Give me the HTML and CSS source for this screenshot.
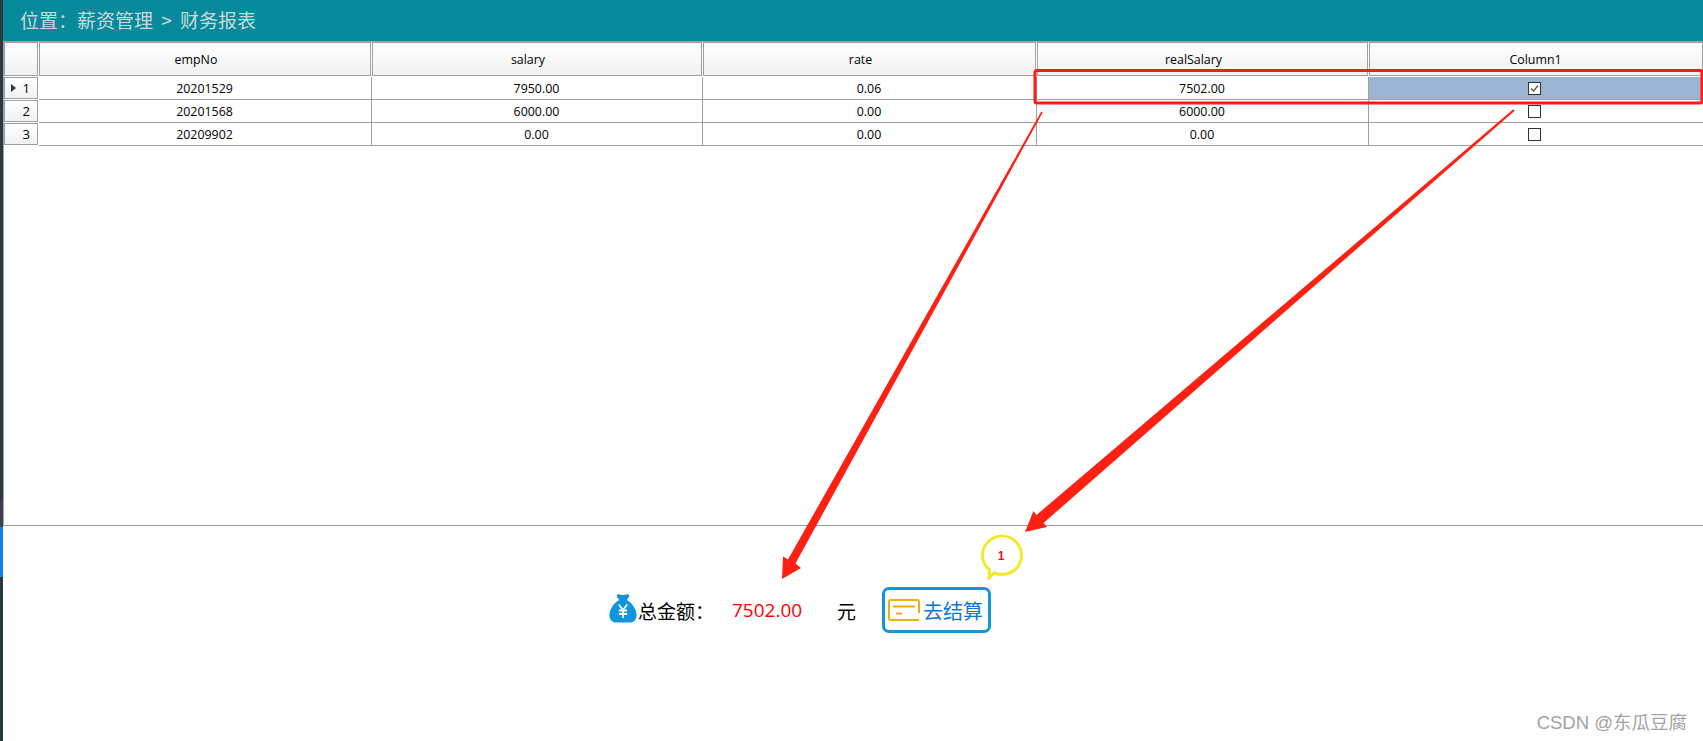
FILE: index.html
```html
<!DOCTYPE html>
<html lang="zh">
<head>
<meta charset="utf-8">
<title>财务报表</title>
<link rel="stylesheet" href="styles.css">
</head>
<body>
<div class="app">
  <aside class="rail">
    <div class="rail-top"></div>
    <div class="rail-mid"></div>
    <div class="rail-active"></div>
    <div class="rail-bottom"></div>
  </aside>
  <main class="main">
    <header class="topbar">位置：薪资管理 &gt; 财务报表</header>
    <section class="gridbox">
      <div class="grid">
        <div class="corner"></div>
        <div class="head">empNo</div>
        <div class="head">salary</div>
        <div class="head">rate</div>
        <div class="head">realSalary</div>
        <div class="head head-plain">Column1</div>

        <div class="rowhead"><span class="pointer"></span>1</div>
        <div class="cell">20201529</div>
        <div class="cell">7950.00</div>
        <div class="cell">0.06</div>
        <div class="cell">7502.00</div>
        <div class="cell cell-box cell-selected"><svg class="check" viewBox="0 0 13 13"><rect x="0.5" y="0.5" width="12" height="12" fill="#fff" stroke="#333"/><path d="M3 6.5 5.5 9 10 3.5" fill="none" stroke="#555" stroke-width="1.2"/></svg></div>

        <div class="rowhead">2</div>
        <div class="cell">20201568</div>
        <div class="cell">6000.00</div>
        <div class="cell">0.00</div>
        <div class="cell">6000.00</div>
        <div class="cell cell-box"><svg class="check" viewBox="0 0 13 13"><rect x="0.5" y="0.5" width="12" height="12" fill="#fff" stroke="#333"/></svg></div>

        <div class="rowhead">3</div>
        <div class="cell">20209902</div>
        <div class="cell">0.00</div>
        <div class="cell">0.00</div>
        <div class="cell">0.00</div>
        <div class="cell cell-box"><svg class="check" viewBox="0 0 13 13"><rect x="0.5" y="0.5" width="12" height="12" fill="#fff" stroke="#333"/></svg></div>
      </div>
    </section>
    <footer class="footer">
      <svg class="bag" viewBox="0 0 30 30" preserveAspectRatio="none">
        <path d="M9 1.5C11 0.5 13 2 15 2s4-1.500 6-0.500c1.500 1 0.500 3-2 5.500 6 3 10.500 9.500 10.500 15 0 5.500-3.500 7.500-7 7.500H7.500C4 29.500 0.500 27.500 0.500 22 0.500 16.500 5 10 11 7 8.500 4.500 7.500 2.500 9 1.500Z" fill="#1296db"/>
        <path d="M10.500 11.500 15 17l4.500-5.500M15 17v8M10.500 17.500h9M10.500 21h9" fill="none" stroke="#fff" stroke-width="1.800"/>
      </svg>
      <span class="label">总金额：</span>
      <span class="amount">7502.00</span>
      <span class="unit">元</span>
      <button class="pay">
        <svg class="card" viewBox="0 0 32 22">
          <path d="M31 14V3Q31 1 29 1H3Q1 1 1 3V19Q1 21 3 21H31" fill="none" stroke="#eab00e" stroke-width="2"/>
          <path d="M5 7.500H27M8 14.500H14" fill="none" stroke="#eab00e" stroke-width="2"/>
        </svg>
        <span>去结算</span>
      </button>
    </footer>
  </main>
</div>

<div class="bubble">
  <svg class="bubble-shape" viewBox="0 0 42 46">
    <path d="M8.500 35.500C4 32 1.500 27 1.500 21.500 1.500 11 10 2 21 2s19.500 9 19.500 19.500S32 40.500 21 40.500c-3 0-5.500-.5-8-1.500L8 44Z" fill="#fff" stroke="#f4e82a" stroke-width="3"/>
  </svg>
  <span class="bubble-num">1</span>
</div>

<svg class="marks" viewBox="0 0 1703 741">
  <rect x="1035" y="70.500" width="667" height="32.500" rx="2" fill="none" stroke="#ff1c12" stroke-width="3"/>
  <polygon points="1042.700,112.400 795.500,563.500 801,568 782,579 783,556.500 788,559.500 1041.300,111.600" fill="#ff2014"/>
  <polygon points="1514.700,110.700 1043.500,523 1047,527 1025,532 1033.500,511 1036.500,515 1513.300,109.300" fill="#ff2014"/>
</svg>

<div class="watermark">CSDN @东瓜豆腐</div>
</body>
</html>
```
FILE: styles.css
```css
* { box-sizing: border-box; }
html, body { margin: 0; padding: 0; }
body {
  width: 1703px;
  height: 741px;
  overflow: hidden;
  background: #fff;
  font-family: "Open Sans", "Noto Sans CJK SC", sans-serif;
  color: #000;
  position: relative;
}
.app { display: flex; width: 1703px; height: 741px; }

.rail { width: 3px; display: flex; flex-direction: column; }
.rail-top { height: 500px; background: #2f3942; }
.rail-mid { height: 27px; background: #3e4149; }
.rail-active { height: 50px; background: #0a84e6; }
.rail-bottom { flex: 1; background: #283740; }

.main { flex: 1; display: flex; flex-direction: column; min-width: 0; }

.topbar {
  height: 41px;
  flex: none;
  background: #068a9b;
  color: #c9d9da;
  font-family: "Noto Sans CJK SC", sans-serif;
  font-size: 19px;
  word-spacing: 4px;
  line-height: 40px;
  padding-left: 17px;
}

.gridbox {
  height: 485px;
  flex: none;
  border-top: 1px solid #a0a0a0;
  border-left: 1px solid #a0a0a0;
  border-bottom: 1px solid #a0a0a0;
}
.grid {
  display: grid;
  grid-template-columns: 35px 333px 331px 334px 332px 334px;
  grid-template-rows: 35px 23px 23px 23px;
  font-size: 12.4px;
}
.corner, .head, .rowhead {
  border: 1.500px solid #a0a0a0;
  background: linear-gradient(#fff, #f1f1f1);
  margin-right: 1px;
  margin-bottom: 1px;
}
.head {
  display: flex;
  align-items: center;
  justify-content: center;
  padding-right: 18px;
}
.head-plain { padding-right: 1px; margin-right: 0; }
.rowhead {
  display: flex;
  align-items: center;
  justify-content: flex-end;
  padding-right: 7px;
  position: relative;
  font-size: 13px;
}
.pointer {
  position: absolute;
  left: 6px;
  top: 6px;
  border-left: 5px solid #333;
  border-top: 4px solid transparent;
  border-bottom: 4px solid transparent;
}
.cell {
  display: flex;
  align-items: center;
  justify-content: center;
  padding-right: 1px;
  border-right: 1px solid #a0a0a0;
  border-bottom: 1px solid #a0a0a0;
}
.cell-box { padding-right: 3px; border-right: none; }
.cell-selected { background: #9ab4d1; }
.check { width: 13px; height: 13px; display: block; }

.footer {
  display: flex;
  align-items: center;
  align-self: flex-start;
  height: 46px;
  margin: 61px 0 0 605px;
  font-size: 19px;
  font-family: "Noto Sans CJK SC", sans-serif;
}
.bag { width: 28px; height: 30px; flex: none; margin: 0 1px 4px 1px; }
.label { width: 94px; }
.amount {
  width: 105px;
  color: #f00;
  font-family: "Open Sans", sans-serif;
}
.unit { width: 45px; }
.pay {
  width: 109px;
  height: 46px;
  padding: 0 0 0 3px;
  display: flex;
  align-items: center;
  gap: 3px;
  border: 3px solid #1296db;
  border-radius: 7px;
  background: #fff;
  color: #0b78d6;
  font-family: "Noto Sans CJK SC", sans-serif;
  font-size: 20px;
}
.card { width: 32px; height: 22px; flex: none; }

.bubble {
  position: absolute;
  left: 981px;
  top: 534px;
  width: 42px;
  height: 46px;
}
.bubble-shape { width: 42px; height: 46px; display: block; }
.bubble-num {
  position: absolute;
  left: 0;
  top: 15px;
  width: 40px;
  text-align: center;
  color: #e8121e;
  font: bold 12px "Liberation Sans", sans-serif;
}

.marks {
  position: absolute;
  left: 0;
  top: 0;
  width: 1703px;
  height: 741px;
  pointer-events: none;
}
.watermark {
  position: absolute;
  right: 16px;
  top: 711px;
  color: #a3a3a3;
  font-size: 18.500px;
  line-height: 24px;
  font-family: "Liberation Sans", "Noto Sans CJK SC", sans-serif;
}
```
